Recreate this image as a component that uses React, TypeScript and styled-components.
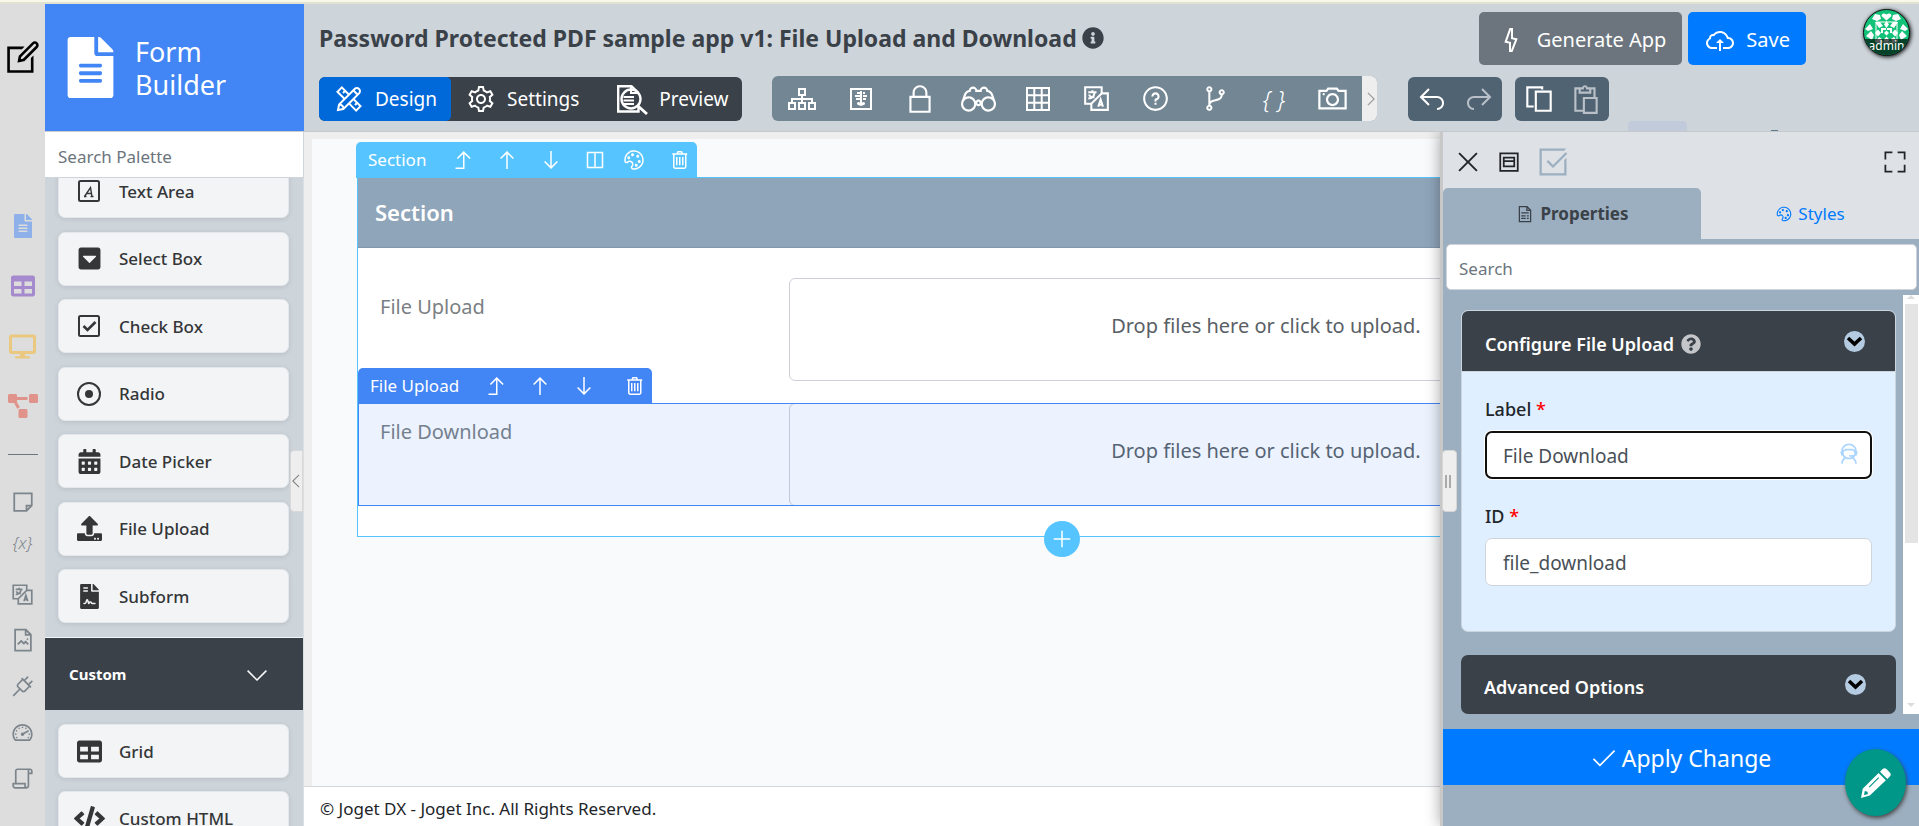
import React, { useState } from "react";
import styled, { createGlobalStyle, css } from "styled-components";
import {
  LiaAngleLeftSolid, LiaAngleDownSolid, LiaAngleRightSolid, LiaArrowDownSolid, LiaArrowUpSolid,
  LiaBinocularsSolid, LiaBoltSolid, LiaCameraSolid, LiaCheckSolid, LiaCheckSquareSolid,
  LiaClipboardSolid, LiaCloudUploadAltSolid, LiaCodeBranchSolid, LiaCogSolid, LiaColumnsSolid,
  LiaCopySolid, LiaEditSolid, LiaExpandSolid, LiaFileImage, LiaFileInvoiceSolid, LiaLanguageSolid,
  LiaLevelUpAltSolid, LiaLockSolid, LiaPaletteSolid, LiaPencilRulerSolid, LiaPlugSolid,
  LiaPlusSolid, LiaQuestionCircleSolid, LiaReplySolid, LiaScrollSolid, LiaShareSolid,
  LiaSitemapSolid, LiaStickyNote, LiaTachometerAltSolid, LiaTimesSolid, LiaTrashAltSolid,
  LiaUserAstronautSolid, LiaWindowMaximize, LiaXRaySolid,
} from "react-icons/lia";
import {
  FaCalendarAlt, FaCaretSquareDown, FaCode, FaDesktop, FaFileAlt, FaFileContract, FaInfoCircle,
  FaProjectDiagram, FaQuestionCircle, FaTable, FaUpload,
} from "react-icons/fa";

const GlobalStyle = createGlobalStyle`
  *, *::before, *::after { box-sizing: border-box; }
  body {
    margin: 0;
    font-family: "Noto Sans", "Open Sans", sans-serif;
    font-size: 17px;
    color: #212529;
    overflow: hidden;
  }
  button, input { font: inherit; color: inherit; }
  button { border: 0; padding: 0; background: none; cursor: pointer; }
  a { text-decoration: none; color: inherit; }
  svg { display: block; flex: none; }
  input::placeholder { color: #6c757d; opacity: 1; }
`;

const Page = styled.div`
  height: 100vh;
  display: flex;
  flex-direction: column;
`;
const TopStrip = styled.div`
  flex: none;
  height: 4px;
  background: #f8f8e8;
  border-bottom: 2px solid #e2e2d2;
`;
const Shell = styled.div`
  flex: 1;
  min-height: 0;
  display: grid;
  grid-template-columns: 45px 259px minmax(0, 1fr);
`;

/* ---- narrow rail ---- */
const Rail = styled.nav`
  min-height: 0;
  overflow: hidden;
  background: #ddd;
  display: flex;
  flex-direction: column;
  color: #7d858c;
`;
const RailHome = styled.a`
  height: 106px;
  flex: none;
  margin-bottom: 86px;
  display: grid;
  place-items: center;
  color: #000;
`;
const RailApp = styled.a<{ $color: string }>`
  height: 60px;
  flex: none;
  display: grid;
  place-items: center;
  color: ${(p) => p.$color};
`;
const RailDivider = styled.hr`
  flex: none;
  width: 30px;
  margin: 18px auto 24px 8px;
  border: 0;
  border-top: 1px solid #6c757d;
`;
const RailTool = styled.a`
  height: 46px;
  flex: none;
  display: grid;
  place-items: center;
`;
const RailVar = styled.span`
  font-size: 17px;
  line-height: 20px;
  padding-bottom: 10px;
  font-style: italic;
  font-weight: 300;
`;

/* ---- palette ---- */
const Palette = styled.aside`
  position: relative;
  min-height: 0;
  display: flex;
  flex-direction: column;
  background: #cdd4da;
`;
const Brand = styled.header`
  flex: none;
  height: 127px;
  display: flex;
  align-items: center;
  gap: 14px;
  padding-left: 15px;
  background: #4285f4;
  color: #fff;
`;
const BrandName = styled.h1`
  margin: 0;
  width: 120px;
  font-size: 27px;
  line-height: 33px;
  font-weight: 400;
`;
const PaletteSearch = styled.input`
  flex: none;
  width: 258px;
  height: 47px;
  padding: 4px 13px 0;
  border: 0;
  border-top: 1px solid #ccc;
  border-bottom: 1px solid #ced4da;
  outline: 0;
  background: #fff;
`;
const PaletteScroll = styled.div`
  flex: 1;
  min-height: 0;
  overflow: hidden;
  border-right: 1px solid #dcdfe2;
`;
const ItemList = styled.div<{ $scrolled?: boolean }>`
  display: flex;
  flex-direction: column;
  justify-content: space-between;
  gap: 13px;
  padding: 0 14px 0 13px;
  ${(p) =>
    p.$scrolled
      ? css`margin-top: -14px; margin-bottom: 14px; height: 459px;`
      : css`margin-top: 14px;`}
`;
const Item = styled.button`
  flex: none;
  height: 54px;
  display: flex;
  align-items: center;
  gap: 14px;
  padding-left: 14px;
  border: 1px solid #e4e8ec;
  border-radius: 7px;
  background: #f3f4f6;
  box-shadow: 0 1px 5px rgba(0, 0, 0, 0.1);
  color: #343638;
  font-weight: 500;
`;
const ItemIcon = styled.span`
  width: 32px;
  display: grid;
  place-items: center;
`;
const GroupHeader = styled.button`
  width: 100%;
  height: 73px;
  display: flex;
  align-items: center;
  justify-content: space-between;
  padding: 0 34px 0 24px;
  border-top: 1px solid #f4f5f7;
  background: #3a4148;
  color: #fff;
  font-size: 15px;
  font-weight: 700;
`;
const Collapse = styled.button`
  position: absolute;
  right: 1px;
  top: 446px;
  width: 13px;
  height: 62px;
  display: flex;
  align-items: center;
  justify-content: center;
  overflow: hidden;
  border: 1px solid #d8d8d8;
  border-radius: 4px 0 0 4px;
  background: #eee;
  color: #888;
`;

/* ---- header ---- */
const Main = styled.main`
  min-width: 0;
  min-height: 0;
  display: flex;
  flex-direction: column;
`;
const Header = styled.header`
  position: relative;
  z-index: 2;
  flex: none;
  display: flex;
  flex-direction: column;
  gap: 11px;
  padding: 5px 9px 10px 15px;
  background: #cdd4da;
  border-bottom: 1px solid #c6c9cc;
`;
const TitleRow = styled.div`
  height: 56px;
  display: flex;
  align-items: flex-end;
`;
const Title = styled.h2`
  flex: 1;
  margin: 0;
  height: 53px;
  padding-bottom: 2px;
  display: flex;
  align-items: center;
  gap: 5px;
  font-size: 23px;
  font-weight: 700;
  color: #3a4148;
  white-space: nowrap;
`;
const Actions = styled.div`
  display: flex;
  gap: 6px;
  margin-right: 57px;
`;
const ActionButton = styled.button<{ $primary?: boolean }>`
  height: 53px;
  display: flex;
  align-items: center;
  gap: 10px;
  padding: 2px 16px 0;
  border-radius: 5px;
  background: ${(p) => (p.$primary ? "#007bff" : "#6c757d")};
  color: #fff;
  font-size: 20px;
`;
const Avatar = styled.a`
  align-self: flex-start;
  position: relative;
  width: 47px;
  height: 47px;
  border-radius: 50%;
  border: 1px solid #111;
  overflow: hidden;
  background: #12c278;
  box-shadow: 1px 1px 4px #000;
`;
const AvatarName = styled.span`
  position: absolute;
  left: 0;
  right: 0;
  bottom: 0;
  height: 16px;
  line-height: 14px;
  font-size: 12px;
  text-align: center;
  background: rgba(0, 0, 0, 0.66);
  color: #fff;
`;
const ToolRow = styled.div`
  height: 45px;
  display: flex;
  align-items: flex-end;
`;
const Modes = styled.div`
  height: 44px;
  display: flex;
  border-radius: 6px;
  overflow: hidden;
  background: #3a4148;
  margin-right: 30px;
`;
const Mode = styled.button<{ $active?: boolean; $inset?: number }>`
  display: flex;
  align-items: center;
  gap: 10px;
  padding: 0 14px 0 ${(p) => p.$inset ?? 14}px;
  border-radius: 5px;
  color: #fff;
  font-size: 19px;
  background: ${(p) => (p.$active ? "#0069d9" : "transparent")};
`;
const Tools = styled.div`
  height: 45px;
  display: flex;
  border-radius: 6px;
  overflow: hidden;
  background: #738694;
  color: #fff;
  margin-right: 31px;
`;
const Tool = styled.button`
  width: 59px;
  display: grid;
  place-items: center;
`;
const Braces = styled.span`
  font-size: 24px;
  line-height: 28px;
  font-style: italic;
  font-weight: 300;
`;
const MoreTools = styled.button`
  width: 15px;
  display: flex;
  align-items: center;
  justify-content: center;
  overflow: hidden;
  background: #eee;
  color: #999;
`;
const Pair = styled.div`
  height: 44px;
  display: flex;
  border-radius: 6px;
  background: #506373;
  color: #fff;
  margin-right: 13px;
`;
const PairButton = styled.button`
  width: 47px;
  display: grid;
  place-items: center;
  &:disabled { opacity: 0.6; }
`;
const HiddenTab = styled.span`
  position: absolute;
  right: 232px;
  bottom: 0;
  width: 59px;
  height: 10px;
  border-radius: 4px 4px 0 0;
  background: #c2cbdb;
  &::after {
    content: "";
    position: absolute;
    left: 143px;
    bottom: 0;
    width: 7px;
    height: 1px;
    background: #5f7a8c;
  }
`;

/* ---- canvas ---- */
const Workspace = styled.div`
  position: relative;
  z-index: 1;
  flex: 1;
  min-height: 0;
  display: flex;
  flex-direction: column;
  background: #eee;
  padding-top: 7px;
`;
const Canvas = styled.div`
  flex: 1;
  min-height: 0;
  margin-left: 8px;
  padding: 3px 153px 0 44px;
  background: #f9fafc;
`;
const Footer = styled.footer`
  flex: none;
  height: 40px;
  padding: 4px 16px 0;
  border-top: 1px solid #d6d8da;
  background: #fff;
  line-height: 35px;
`;
const ElementBar = styled.div<{ $nested?: boolean }>`
  position: relative;
  z-index: 2;
  width: fit-content;
  height: 36px;
  display: flex;
  align-items: stretch;
  padding-left: 12px;
  border-radius: 5px 5px 0 0;
  background: ${(p) => (p.$nested ? "#4285f4" : "#56c4ff")};
  color: #fff;
  ${(p) =>
    p.$nested
      ? css`position: absolute; left: 0; bottom: calc(100% - 1px);`
      : css`margin-bottom: -1px;`}
`;
const BarName = styled.span`
  line-height: 36px;
  margin-right: 15px;
`;
const BarButton = styled.button<{ $kind?: "tight" | "last" }>`
  width: ${(p) => (p.$kind === "tight" ? 34 : p.$kind === "last" ? 36 : 44)}px;
  margin-left: ${(p) => (p.$kind === "last" ? 10 : 0)}px;
  display: grid;
  place-items: center;
`;
const Section = styled.section`
  position: relative;
  margin-left: 1px;
  border: 1px solid #56c4ff;
  background: #fff;
`;
const SectionTitle = styled.h3`
  margin: 0;
  height: 70px;
  padding-left: 17px;
  line-height: 68px;
  border-bottom: 1px solid #7f98ac;
  background: #8fa5b9;
  color: #fff;
  font-size: 22px;
  font-weight: 600;
`;
const Fields = styled.div`
  display: flex;
  flex-direction: column;
  gap: 22px;
  padding: 30px 0;
`;
const FieldRow = styled.div`
  position: relative;
  display: grid;
  grid-template-columns: 3fr 7fr;
  padding: 0 22px;
`;
const FieldLabel = styled.span`
  line-height: 57px;
  font-size: 20px;
  color: #7b7f84;
`;
const DropZone = styled.button`
  height: 103px;
  padding-bottom: 8px;
  border: 1px solid #cdd1d7;
  border-radius: 6px;
  color: #5a5f66;
  font-size: 20px;
`;
const Selection = styled.div`
  position: absolute;
  inset: 0;
  border: 1px solid #4285f4;
  background: rgba(66, 133, 244, 0.1);
`;
const AddSection = styled.button`
  position: absolute;
  left: 50%;
  bottom: -21px;
  margin-left: -18px;
  width: 36px;
  height: 36px;
  border-radius: 50%;
  display: grid;
  place-items: center;
  background: #56c4ff;
  color: #fff;
`;

/* ---- properties panel ---- */
const Panel = styled.aside`
  position: absolute;
  z-index: 3;
  top: 0;
  right: 0;
  bottom: 0;
  width: 479px;
  display: flex;
  flex-direction: column;
  border-left: 3px solid #c8c8c8;
  background: #9cafc0;
  box-shadow: 0 0 14px rgba(0, 0, 0, 0.35);
`;
const PanelHead = styled.div`
  flex: none;
  height: 56px;
  display: flex;
  align-items: center;
  gap: 12px;
  padding: 4px 10px 0;
  background: #dee1e5;
`;
const PanelAction = styled.button<{ $muted?: boolean; $end?: boolean }>`
  color: ${(p) => (p.$muted ? "#9cafc0" : "#212529")};
  margin-left: ${(p) => (p.$end ? "auto" : "0")};
`;
const Tabs = styled.div`
  flex: none;
  height: 51px;
  display: flex;
  background: #dee1e5;
`;
const Tab = styled.button<{ $active?: boolean }>`
  width: ${(p) => (p.$active ? "258px" : "auto")};
  flex: ${(p) => (p.$active ? "none" : 1)};
  display: flex;
  align-items: center;
  justify-content: center;
  gap: 5px;
  border-radius: 5px 5px 0 0;
  background: ${(p) => (p.$active ? "#9cafc0" : "transparent")};
  color: ${(p) => (p.$active ? "#3a4148" : "#007bff")};
  font-weight: ${(p) => (p.$active ? 700 : 400)};
`;
const PanelSearch = styled.input`
  flex: none;
  height: 46px;
  margin: 5px 2px 5px 3px;
  padding: 2px 12px 0;
  border: 1px solid #ced4da;
  border-radius: 5px;
  outline: 0;
  background: #fff;
`;
const PanelScroll = styled.div`
  flex: 1;
  min-height: 0;
  display: flex;
`;
const Cards = styled.div`
  flex: 1;
  min-width: 0;
  overflow: hidden;
  display: flex;
  flex-direction: column;
  gap: 23px;
  padding: 15px 7px 0 18px;
`;
const Card = styled.section`
  flex: none;
  border: 1px solid #cbd5dd;
  border-radius: 7px;
  overflow: hidden;
  background: #dfefff;
`;
const ClosedCard = styled.section`
  flex: none;
  border-radius: 7px;
  overflow: hidden;
`;
const CardHead = styled.button<{ $open?: boolean }>`
  width: 100%;
  height: ${(p) => (p.$open ? 61 : 59)}px;
  display: flex;
  align-items: center;
  gap: 7px;
  padding: 5px 30px 0 23px;
  background: #3a4148;
  color: #fff;
  font-size: 18px;
  font-weight: 600;
  border-bottom: ${(p) => (p.$open ? "1px solid #cbd5dd" : "0")};
`;
const Toggle = styled.span`
  margin: 0 0 5px auto;
`;
const Form = styled.div`
  display: flex;
  flex-direction: column;
  gap: 25px;
  padding: 25px 23px 45px;
`;
const FormField = styled.div`
  display: flex;
  flex-direction: column;
  gap: 10px;
`;
const FormLabel = styled.label`
  font-size: 18px;
  line-height: 24px;
  font-weight: 500;
`;
const Required = styled.span`
  color: #f00;
`;
const InputWrap = styled.div`
  position: relative;
`;
const TextInput = styled.input<{ $focused?: boolean }>`
  display: block;
  width: 100%;
  height: 48px;
  padding: 1px ${(p) => (p.$focused ? 16 : 17)}px 0;
  outline: 0;
  border: ${(p) => (p.$focused ? "2px solid #101010" : "1px solid #ced4da")};
  border-radius: 7px;
  box-shadow: ${(p) => (p.$focused ? "0 0 0 1px #fff" : "none")};
  background: #fff;
  color: #495057;
  font-size: 19px;
`;
const Assist = styled.button`
  position: absolute;
  right: 9px;
  top: 9px;
  color: #add6ff;
`;
const ScrollTrack = styled.div`
  width: 16px;
  display: flex;
  flex-direction: column;
  align-items: center;
  gap: 5px;
  background: #fff;
`;
const ScrollThumb = styled.div`
  width: 13px;
  height: 57%;
  background: #e4e4e4;
`;
const ScrollArrow = styled.span<{ $down?: boolean }>`
  border: 4px solid transparent;
  border-top-width: ${(p) => (p.$down ? 4 : 0)}px;
  border-bottom-width: ${(p) => (p.$down ? 0 : 4)}px;
  border-top-color: #ddd;
  border-bottom-color: #ddd;
  margin-top: ${(p) => (p.$down ? "auto" : 0)};
  margin-bottom: ${(p) => (p.$down ? 7 : 0)}px;
`;
const Apply = styled.button`
  flex: none;
  height: 56px;
  margin: 15px 0 41px;
  display: flex;
  align-items: center;
  justify-content: center;
  gap: 5px;
  padding-top: 2px;
  background: #007bff;
  color: #fff;
  font-size: 23px;
`;
const Grip = styled.button`
  position: absolute;
  left: -1px;
  top: 318px;
  width: 15px;
  height: 62px;
  border: 1px solid #d6d6d6;
  border-radius: 4px;
  background: #eee;
  display: flex;
  align-items: center;
  justify-content: center;
  gap: 2px;
  padding-right: 3px;
  &::before, &::after {
    content: "";
    flex: none;
    width: 2px;
    height: 13px;
    background: #aaa;
  }
`;
const Fab = styled.button`
  position: absolute;
  z-index: 4;
  right: 13px;
  bottom: 10px;
  width: 61px;
  height: 67px;
  border-radius: 50%;
  display: grid;
  place-items: center;
  background: #009688;
  box-shadow: 1px 2px 4px #444;
`;

/* ---- drawings ---- */
const TextAreaIcon = () => (
  <svg width="22" height="22" viewBox="0 0 22 22" fill="none" stroke="currentColor">
    <rect x="1" y="1" width="20" height="20" rx="1.5" strokeWidth="2" />
    <path d="M6.5 16.5 12.5 7.5 14 16.5M8.5 13.5H13.5M6 16.5h2.5M12.5 16.5h3" strokeWidth="1.4" />
  </svg>
);
const CheckBoxIcon = () => (
  <svg width="22" height="22" viewBox="0 0 22 22" fill="none" stroke="currentColor" strokeWidth="2">
    <rect x="1" y="1" width="20" height="20" rx="1.5" />
    <path d="M5.500 11 9.500 15 17.500 7" strokeWidth="2.600" />
  </svg>
);
const RadioIcon = () => (
  <svg width="24" height="24" viewBox="0 0 24 24" fill="none" stroke="currentColor" strokeWidth="2">
    <circle cx="12" cy="12" r="11" />
    <circle cx="12" cy="12" r="4" fill="currentColor" stroke="none" />
  </svg>
);
const PreviewIcon = () => (
  <svg width="35" height="32" viewBox="0 0 35 32" fill="none" stroke="currentColor" strokeWidth="2.4">
    <path d="M24.500 24V28.500H4.200V3.200H17.500L24.500 10" />
    <path d="M17 3V10H24" strokeWidth="2" />
    <path d="M9.500 14H20M9.500 17.500H20M9.500 21H20" strokeWidth="1.800" />
    <circle cx="17" cy="16" r="9.500" />
    <path d="M24 23 33 31" strokeWidth="2.800" />
  </svg>
);
const GridIcon = () => (
  <svg width="24" height="24" viewBox="0 0 24 24" fill="none" stroke="currentColor" strokeWidth="2">
    <path d="M1 1H23V23H1ZM1 8.300H23M1 15.700H23M8.300 1V23M15.700 1V23" />
  </svg>
);
const ToggleIcon = () => (
  <svg width="21" height="21" viewBox="0 0 21 21">
    <circle cx="10.500" cy="10.500" r="10.500" fill="#b5cbe2" />
    <path d="M4 7 10.500 13 17 7" fill="none" stroke="#000" strokeWidth="3.600" />
  </svg>
);
const PencilIcon = () => (
  <svg width="32" height="32" viewBox="0 0 32 32" fill="#fff">
    <path d="M22.500 2.200Q24.500.3 26.600 2.200L29.800 5.400Q31.700 7.400 29.800 9.400L27.300 11.900 20 4.700Z" />
    <path fillRule="evenodd" d="M18.600 6 25.900 13.300 9.800 28.600 1 31 2.700 21.700ZM4.800 24 4 28 7.800 27.200 7.600 24.700ZM18.300 10.300 8.800 19.800 9.600 20.600 19.100 11.100Z" />
  </svg>
);
const AvatarPattern = () => (
  <svg width="45" height="45" viewBox="0 0 45 45" fill="#fff">
    <path d="M22.500 10.500 17.500 6Q18 2 22.500 4.500 27 2 27.500 6Z" />
    <path d="M13 11 8 9 11 4 16 5 17 9ZM32 11 37 9 34 4 29 5 28 9Z" />
    <path d="M1 19 6 14 9 19 4 21ZM44 19 39 14 36 19 41 21ZM2 26 7 21 10 25 8 30ZM43 26 38 21 35 25 37 30Z" />
    <path d="M11 12 16 12 19 16 15 18ZM34 12 29 12 26 16 30 18ZM22.500 11 20 14.500 22.500 18 25 14.500Z" />
    <path d="M17 18 22 18 22 20 19 20 19 23 17 23ZM28 18 23 18 23 20 26 20 26 23 28 23Z" />
    <path d="M11 23 14 19.500 17 23 14 26.500ZM34 23 31 19.500 28 23 31 26.500ZM22.500 20.500 20 23 22.500 25.500 25 23Z" />
    <path d="M11 32 15 27 18 29 16 33ZM34 32 30 27 27 29 29 33ZM22.500 26.500 19.500 30 22.500 33 25.500 30Z" />
    <path d="M12 12H33V32H12Z" fill="none" stroke="#fff" strokeWidth="1" />
  </svg>
);
const HelpMark = () => <FaQuestionCircle size={20} color="#c4c6c9" />;

const paletteItems = [
  { name: "Text Area", icon: <TextAreaIcon /> },
  { name: "Select Box", icon: <FaCaretSquareDown size={25} /> },
  { name: "Check Box", icon: <CheckBoxIcon /> },
  { name: "Radio", icon: <RadioIcon /> },
  { name: "Date Picker", icon: <FaCalendarAlt size={25} /> },
  { name: "File Upload", icon: <FaUpload size={25} /> },
  { name: "Subform", icon: <FaFileContract size={25} /> },
];
const customItems = [
  { name: "Grid", icon: <FaTable size={25} /> },
  { name: "Custom HTML", icon: <FaCode size={31} /> },
];
const tools = [
  { name: "Tree viewer", icon: <LiaSitemapSolid size={32} /> },
  { name: "X-ray viewer", icon: <LiaXRaySolid size={32} /> },
  { name: "Permission", icon: <LiaLockSolid size={34} /> },
  { name: "Find usages", icon: <LiaBinocularsSolid size={35} /> },
  { name: "Table", icon: <GridIcon /> },
  { name: "Internationalization", icon: <LiaLanguageSolid size={33} /> },
  { name: "Help", icon: <LiaQuestionCircleSolid size={33} /> },
  { name: "Diff checker", icon: <LiaCodeBranchSolid size={33} /> },
  { name: "JSON definition", icon: <Braces>{"{ }"}</Braces> },
  { name: "Screenshot", icon: <LiaCameraSolid size={35} /> },
];

export default function App() {
  const [label, setLabel] = useState("File Download");
  const [id, setId] = useState("file_download");

  return (
    <Page>
      <GlobalStyle />
      <TopStrip />
      <Shell>
        <Rail>
          <RailHome href="#" aria-label="App composer"><LiaEditSolid size={42} /></RailHome>
          <RailApp href="#forms" aria-label="Forms" $color="#8fb1ea"><FaFileAlt size={24} /></RailApp>
          <RailApp href="#lists" aria-label="Lists" $color="#a58bcd"><FaTable size={24} /></RailApp>
          <RailApp href="#ui" aria-label="UI" $color="#eac880"><FaDesktop size={27} /></RailApp>
          <RailApp href="#process" aria-label="Processes" $color="#e0938b"><FaProjectDiagram size={30} /></RailApp>
          <RailDivider />
          <RailTool href="#note" aria-label="Notes"><LiaStickyNote size={28} /></RailTool>
          <RailTool href="#vars"><RailVar>{"{x}"}</RailVar></RailTool>
          <RailTool href="#i18n" aria-label="Messages"><LiaLanguageSolid size={27} /></RailTool>
          <RailTool href="#res" aria-label="Resources"><LiaFileImage size={28} /></RailTool>
          <RailTool href="#plugins" aria-label="Plugins"><LiaPlugSolid size={27} /></RailTool>
          <RailTool href="#perf" aria-label="Performance"><LiaTachometerAltSolid size={27} /></RailTool>
          <RailTool href="#logs" aria-label="Logs"><LiaScrollSolid size={27} /></RailTool>
        </Rail>

        <Palette>
          <Brand>
            <FaFileAlt size={61} />
            <BrandName>Form Builder</BrandName>
          </Brand>
          <PaletteSearch type="text" placeholder="Search Palette" aria-label="Search Palette" />
          <PaletteScroll>
            <ItemList $scrolled>
              {paletteItems.map((item) => (
                <Item key={item.name}><ItemIcon>{item.icon}</ItemIcon>{item.name}</Item>
              ))}
            </ItemList>
            <GroupHeader>Custom<LiaAngleDownSolid size={24} /></GroupHeader>
            <ItemList>
              {customItems.map((item) => (
                <Item key={item.name}><ItemIcon>{item.icon}</ItemIcon>{item.name}</Item>
              ))}
            </ItemList>
          </PaletteScroll>
          <Collapse aria-label="Collapse palette"><LiaAngleLeftSolid size={18} /></Collapse>
        </Palette>

        <Main>
          <Header>
            <TitleRow>
              <Title>
                Password Protected PDF sample app v1: File Upload and Download
                <FaInfoCircle size={22} />
              </Title>
              <Actions>
                <ActionButton><LiaBoltSolid size={32} />Generate App</ActionButton>
                <ActionButton $primary><LiaCloudUploadAltSolid size={32} />Save</ActionButton>
              </Actions>
              <Avatar href="#profile">
                <AvatarPattern />
                <AvatarName>admin</AvatarName>
              </Avatar>
            </TitleRow>
            <ToolRow>
              <Modes>
                <Mode $active><LiaPencilRulerSolid size={32} />Design</Mode>
                <Mode><LiaCogSolid size={32} />Settings</Mode>
                <Mode $inset={21}><PreviewIcon />Preview</Mode>
              </Modes>
              <Tools>
                {tools.map((tool) => (
                  <Tool key={tool.name} aria-label={tool.name}>{tool.icon}</Tool>
                ))}
                <MoreTools aria-label="More tools"><LiaAngleRightSolid size={18} /></MoreTools>
              </Tools>
              <Pair>
                <PairButton aria-label="Undo"><LiaReplySolid size={32} /></PairButton>
                <PairButton aria-label="Redo" disabled><LiaShareSolid size={32} /></PairButton>
              </Pair>
              <Pair>
                <PairButton aria-label="Copy"><LiaCopySolid size={34} /></PairButton>
                <PairButton aria-label="Paste" disabled><LiaClipboardSolid size={34} /></PairButton>
              </Pair>
            </ToolRow>
            <HiddenTab />
          </Header>

          <Workspace>
            <Canvas>
              <ElementBar>
                <BarName>Section</BarName>
                <BarButton aria-label="Select parent"><LiaLevelUpAltSolid size={24} /></BarButton>
                <BarButton aria-label="Move up"><LiaArrowUpSolid size={24} /></BarButton>
                <BarButton aria-label="Move down"><LiaArrowDownSolid size={24} /></BarButton>
                <BarButton aria-label="Add column"><LiaColumnsSolid size={24} /></BarButton>
                <BarButton aria-label="Style" $kind="tight"><LiaPaletteSolid size={24} /></BarButton>
                <BarButton aria-label="Delete" $kind="last"><LiaTrashAltSolid size={24} /></BarButton>
              </ElementBar>
              <Section>
                <SectionTitle>Section</SectionTitle>
                <Fields>
                  <FieldRow>
                    <FieldLabel>File Upload</FieldLabel>
                    <DropZone>Drop files here or click to upload.</DropZone>
                  </FieldRow>
                  <FieldRow>
                    <FieldLabel>File Download</FieldLabel>
                    <DropZone>Drop files here or click to upload.</DropZone>
                    <Selection />
                    <ElementBar $nested>
                      <BarName>File Upload</BarName>
                      <BarButton aria-label="Select parent"><LiaLevelUpAltSolid size={24} /></BarButton>
                      <BarButton aria-label="Move up"><LiaArrowUpSolid size={24} /></BarButton>
                      <BarButton aria-label="Move down"><LiaArrowDownSolid size={24} /></BarButton>
                      <BarButton aria-label="Delete" $kind="last"><LiaTrashAltSolid size={24} /></BarButton>
                    </ElementBar>
                  </FieldRow>
                </Fields>
                <AddSection aria-label="Add section"><LiaPlusSolid size={24} /></AddSection>
              </Section>
            </Canvas>
            <Footer>© Joget DX - Joget Inc. All Rights Reserved.</Footer>

            <Panel>
              <PanelHead>
                <PanelAction aria-label="Close"><LiaTimesSolid size={30} /></PanelAction>
                <PanelAction aria-label="Dock"><LiaWindowMaximize size={28} /></PanelAction>
                <PanelAction aria-label="Auto apply" $muted><LiaCheckSquareSolid size={36} /></PanelAction>
                <PanelAction aria-label="Expand" $end><LiaExpandSolid size={28} /></PanelAction>
              </PanelHead>
              <Tabs>
                <Tab $active><LiaFileInvoiceSolid size={20} />Properties</Tab>
                <Tab><LiaPaletteSolid size={18} />Styles</Tab>
              </Tabs>
              <PanelSearch type="text" placeholder="Search" aria-label="Search properties" />
              <PanelScroll>
                <Cards>
                  <Card>
                    <CardHead $open>
                      Configure File Upload<HelpMark />
                      <Toggle><ToggleIcon /></Toggle>
                    </CardHead>
                    <Form>
                      <FormField>
                        <FormLabel htmlFor="label">Label <Required>*</Required></FormLabel>
                        <InputWrap>
                          <TextInput id="label" $focused value={label} onChange={(e) => setLabel(e.target.value)} />
                          <Assist aria-label="Assist"><LiaUserAstronautSolid size={28} /></Assist>
                        </InputWrap>
                      </FormField>
                      <FormField>
                        <FormLabel htmlFor="id">ID <Required>*</Required></FormLabel>
                        <TextInput id="id" value={id} onChange={(e) => setId(e.target.value)} />
                      </FormField>
                    </Form>
                  </Card>
                  <ClosedCard>
                    <CardHead>Advanced Options<Toggle><ToggleIcon /></Toggle></CardHead>
                  </ClosedCard>
                </Cards>
                <ScrollTrack>
                  <ScrollArrow />
                  <ScrollThumb />
                  <ScrollArrow $down />
                </ScrollTrack>
              </PanelScroll>
              <Apply><LiaCheckSolid size={26} />Apply Change</Apply>
              <Grip aria-label="Resize panel" />
              <Fab aria-label="Edit page"><PencilIcon /></Fab>
            </Panel>
          </Workspace>
        </Main>
      </Shell>
    </Page>
  );
}
